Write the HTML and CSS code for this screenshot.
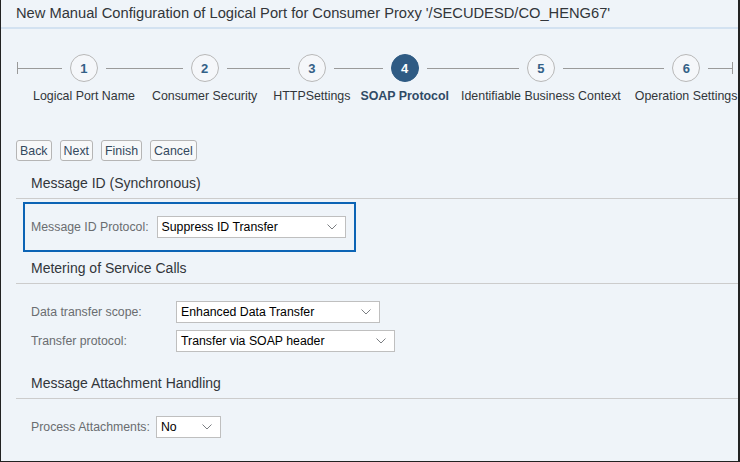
FILE: index.html
```html
<!DOCTYPE html>
<html lang="en">

<head>
    <meta charset="UTF-8">
    <title>Logical Port Configuration</title>
    <link rel="stylesheet" href="styles.css">
</head>

<body>
    <div class="frame">
        <div class="title">New Manual Configuration of Logical Port for Consumer Proxy '/SECUDESD/CO_HENG67'</div>

        <!-- roadmap -->
        <div class="roadmap">
            <div class="capStart"></div>
            <div class="step">
                <div class="stepTop"><span class="ln"></span><span class="num">1</span><span class="ln"></span></div>
                <div class="stepLabel">Logical Port Name</div>
            </div>
            <div class="step padWide">
                <div class="stepTop"><span class="ln"></span><span class="num">2</span><span class="ln"></span></div>
                <div class="stepLabel">Consumer Security</div>
            </div>
            <div class="step padSmall">
                <div class="stepTop"><span class="ln"></span><span class="num">3</span><span class="ln"></span></div>
                <div class="stepLabel">HTTPSettings</div>
            </div>
            <div class="step active">
                <div class="stepTop"><span class="ln"></span><span class="num">4</span><span class="ln"></span></div>
                <div class="stepLabel">SOAP Protocol</div>
            </div>
            <div class="step padMid">
                <div class="stepTop"><span class="ln"></span><span class="num">5</span><span class="ln"></span></div>
                <div class="stepLabel">Identifiable Business Context</div>
            </div>
            <div class="step padSmall last">
                <div class="stepTop"><span class="ln"></span><span class="num">6</span><span class="ln lnEnd"></span></div>
                <div class="stepLabel">Operation Settings</div>
            </div>
        </div>

        <div class="buttons">
            <button class="btn">Back</button>
            <button class="btn">Next</button>
            <button class="btn">Finish</button>
            <button class="btn">Cancel</button>
        </div>

        <div class="content">
            <div class="secHead">Message ID (Synchronous)</div>
            <div class="focusBox">
                <span class="lbl">Message ID Protocol:</span>
                <div class="sel selMsg">Suppress ID Transfer
                    <svg class="chev" width="10" height="6" viewBox="0 0 10 6"><polyline points="0.5,0.5 5,5 9.5,0.5" fill="none" stroke="#7b7e82" stroke-width="1"/></svg>
                </div>
            </div>

            <div class="secHead">Metering of Service Calls</div>
            <div class="formGrid">
                <span class="lbl">Data transfer scope:</span>
                <div class="sel selScope">Enhanced Data Transfer
                    <svg class="chev" width="10" height="6" viewBox="0 0 10 6"><polyline points="0.5,0.5 5,5 9.5,0.5" fill="none" stroke="#7b7e82" stroke-width="1"/></svg>
                </div>
                <span class="lbl">Transfer protocol:</span>
                <div class="sel selProto">Transfer via SOAP header
                    <svg class="chev" width="10" height="6" viewBox="0 0 10 6"><polyline points="0.5,0.5 5,5 9.5,0.5" fill="none" stroke="#7b7e82" stroke-width="1"/></svg>
                </div>
            </div>

            <div class="secHead">Message Attachment Handling</div>
            <div class="formRow">
                <span class="lbl">Process Attachments:</span>
                <div class="sel selNo">No
                    <svg class="chev" width="10" height="6" viewBox="0 0 10 6"><polyline points="0.5,0.5 5,5 9.5,0.5" fill="none" stroke="#7b7e82" stroke-width="1"/></svg>
                </div>
            </div>
        </div>
    </div>
</body>

</html>
```

FILE: styles.css
```css
body {
    margin: 0;
    font-family: "Liberation Sans", Arial, sans-serif;
    color: #32363a;
}

.frame {
    width: 737px;
    height: 461px;
    background-color: #eff4f9;
    border-left: 1px solid #222;
    border-right: 2px solid #222;
    border-bottom: 1px solid #222;
    overflow: hidden;
}

.title {
    height: 27px;
    line-height: 27px;
    padding-left: 15px;
    font-size: 14.7px;
    color: #32363a;
    border-bottom: 2px solid #d3e2f1;
    white-space: nowrap;
}

/* roadmap */
.roadmap {
    display: flex;
    padding: 25px 0 0 16px;
}

.capStart {
    flex-shrink: 0;
    width: 9px;
    height: 28px;
    display: flex;
    align-items: center;
}

.capStart::before {
    content: "";
    width: 1px;
    height: 12px;
    background-color: #9a9a9a;
}

.capStart::after {
    content: "";
    flex: 1;
    height: 1px;
    background-color: #9a9a9a;
}

.step {
    flex-shrink: 0;
    display: flex;
    flex-direction: column;
}

.stepTop {
    display: flex;
    align-items: center;
    gap: 8px;
    height: 28px;
}

.ln {
    flex: 1;
    height: 1px;
    background-color: #9a9a9a;
}

.last .stepTop {
    margin-right: 10px;
}

.lnEnd {
    flex: none;
    width: 25px;
    position: relative;
}

.lnEnd::after {
    content: "";
    position: absolute;
    right: 0;
    top: -6px;
    width: 1px;
    height: 12px;
    background-color: #9a9a9a;
}

.num {
    width: 26px;
    height: 26px;
    border: 1px solid #b8b8b8;
    border-radius: 50%;
    background-color: #f5f7fa;
    color: #346187;
    font-size: 13px;
    font-weight: bold;
    display: flex;
    align-items: center;
    justify-content: center;
}

.active .num {
    background-color: #2f5b84;
    border-color: #2f5b84;
    color: #fff;
}

.stepLabel {
    margin-top: 7px;
    padding: 0 7px;
    font-size: 12.4px;
    white-space: nowrap;
    text-align: center;
}

.padWide .stepLabel {
    padding: 0 10px;
}

.padMid .stepLabel {
    padding: 0 8px;
}

.padSmall .stepLabel {
    padding: 0 6px;
}

.active .stepLabel {
    padding: 0 4px;
    font-weight: bold;
    color: #2f4a66;
}

/* buttons */
.buttons {
    display: flex;
    gap: 8px;
    padding: 37px 0 0 15px;
}

.btn {
    height: 21px;
    padding: 0 3px;
    font-family: inherit;
    font-size: 12.4px;
    color: #34495e;
    background-color: #f7f8f9;
    border: 1px solid #b5b5b5;
    border-radius: 3px;
}

/* form */
.content {
    padding: 7px 0 0 15px;
}

.secHead {
    height: 30px;
    line-height: 30px;
    padding-left: 15px;
    font-size: 14px;
    color: #32363a;
    border-bottom: 1px solid #cccccc;
}

.lbl {
    font-size: 12.3px;
    color: #6a6d70;
    white-space: nowrap;
}

.sel {
    height: 20px;
    padding: 0 8px 0 4px;
    background-color: #fff;
    border: 1px solid #bfbfbf;
    font-size: 12.3px;
    color: #000;
    display: flex;
    align-items: center;
    justify-content: space-between;
}

.chev {
    flex-shrink: 0;
}

.focusBox {
    display: flex;
    align-items: center;
    gap: 8px;
    width: 323px;
    height: 46px;
    margin: 3px 0 1px 7px;
    padding-left: 6px;
    border: 2px solid #0c64b5;
}

.selMsg {
    width: 175px;
}

.formGrid {
    display: grid;
    grid-template-columns: 145px auto;
    justify-content: start;
    align-items: center;
    row-gap: 7px;
    padding: 17px 0 0 15px;
}

.selScope {
    width: 190px;
}

.selProto {
    width: 205px;
}

.formGrid + .secHead {
    margin-top: 16px;
}

.formRow {
    display: flex;
    align-items: center;
    gap: 6px;
    padding: 17px 0 0 15px;
}

.selNo {
    width: 51px;
}
```
